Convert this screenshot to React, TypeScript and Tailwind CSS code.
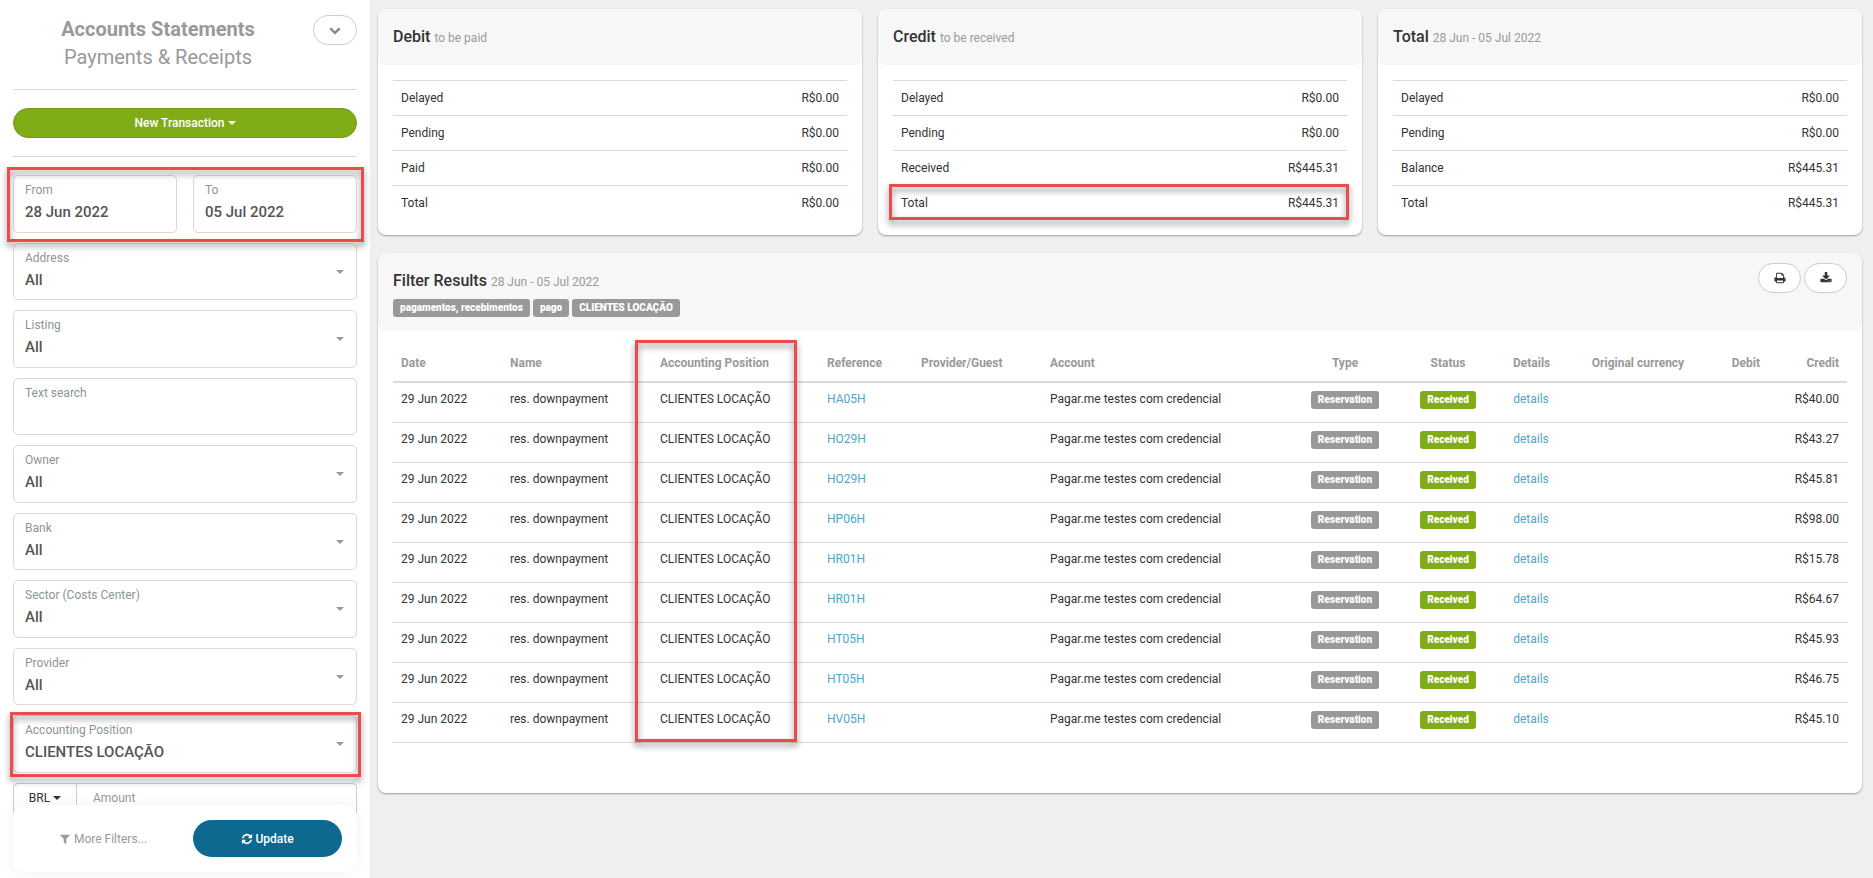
import React from 'react'

const filters = [
    { id: 'address', label: 'Address', value: 'All' },
    { id: 'listing', label: 'Listing', value: 'All' },
    { id: 'search', label: 'Text search', value: '' },
    { id: 'owner', label: 'Owner', value: 'All' },
    { id: 'bank', label: 'Bank', value: 'All' },
    { id: 'sector', label: 'Sector (Costs Center)', value: 'All' },
    { id: 'provider', label: 'Provider', value: 'All' },
    { id: 'position', label: 'Accounting Position', value: 'CLIENTES LOCAÇÃO', marked: true },
]

const summaries = [
    {
        title: 'Debit',
        note: 'to be paid',
        rows: [
            ['Delayed', 'R$0.00'],
            ['Pending', 'R$0.00'],
            ['Paid', 'R$0.00'],
            ['Total', 'R$0.00'],
        ],
    },
    {
        title: 'Credit',
        note: 'to be received',
        marked: true,
        rows: [
            ['Delayed', 'R$0.00'],
            ['Pending', 'R$0.00'],
            ['Received', 'R$445.31'],
            ['Total', 'R$445.31'],
        ],
    },
    {
        title: 'Total',
        note: '28 Jun - 05 Jul 2022',
        rows: [
            ['Delayed', 'R$0.00'],
            ['Pending', 'R$0.00'],
            ['Balance', 'R$445.31'],
            ['Total', 'R$445.31'],
        ],
    },
]

const tags = ['pagamentos, recebimentos', 'pago', 'CLIENTES LOCAÇÃO']

const transactions = [
    { reference: 'HA05H', credit: 'R$40.00' },
    { reference: 'HO29H', credit: 'R$43.27' },
    { reference: 'HO29H', credit: 'R$45.81' },
    { reference: 'HP06H', credit: 'R$98.00' },
    { reference: 'HR01H', credit: 'R$15.78' },
    { reference: 'HR01H', credit: 'R$64.67' },
    { reference: 'HT05H', credit: 'R$45.93' },
    { reference: 'HT05H', credit: 'R$46.75' },
    { reference: 'HV05H', credit: 'R$45.10' },
]

const icons = {
    chevron:
        'M1683 808l-742 741q-19 19-45 19t-45-19l-742-741q-19-19-19-45.500t19-45.500l166-165q19-19 45-19t45 19l531 531 531-531q19-19 45-19t45 19l166 165q19 19 19 45.500t-19 45.500z',
    print: 'M448 1536h896v-256h-896v256zm0-640h896v-384h-160q-40 0-68-28t-28-68v-160h-640v640zm1152 64q0-26-19-45t-45-19-45 19-19 45 19 45 45 19 45-19 19-45zm128 0v416q0 13-9.500 22.500t-22.500 9.500h-224v160q0 40-28 68t-68 28h-960q-40 0-68-28t-28-68v-160h-224q-13 0-22.500-9.500t-9.500-22.500v-416q0-79 56.500-135.500t135.500-56.500h64v-544q0-40 28-68t68-28h672q40 0 88 20t76 48l152 152q28 28 48 76t20 88v256h64q79 0 135.500 56.500t56.500 135.500z',
    download:
        'M1344 1344q0-26-19-45t-45-19-45 19-19 45 19 45 45 19 45-19 19-45zm256 0q0-26-19-45t-45-19-45 19-19 45 19 45 45 19 45-19 19-45zm128-224v320q0 40-28 68t-68 28h-1472q-40 0-68-28t-28-68v-320q0-40 28-68t68-28h465l135 136q58 56 136 56t136-56l136-136h464q40 0 68 28t28 68zm-325-569q17 41-14 70l-448 448q-18 19-45 19t-45-19l-448-448q-31-29-14-70 17-39 59-39h256v-448q0-26 19-45t45-19h256q26 0 45 19t19 45v448h256q42 0 59 39z',
    filter: 'M1595 295q17 41-14 70l-493 493v742q0 42-39 59-13 5-25 5-27 0-45-19l-256-256q-19-19-19-45v-486l-493-493q-31-29-14-70 17-39 59-39h1280q42 0 59 39z',
    refresh:
        'M1639 1056q0 5-1 7-64 268-268 434.500t-478 166.500q-146 0-282.500-55t-243.500-157l-129 129q-19 19-45 19t-45-19-19-45v-448q0-26 19-45t45-19h448q26 0 45 19t19 45-19 45l-137 137q71 66 161 102t187 36q134 0 250-65t186-179q11-17 53-117 8-23 30-23h192q13 0 22.500 9.500t9.500 22.500zm25-800v448q0 26-19 45t-45 19h-448q-26 0-45-19t-19-45 19-45l138-138q-148-137-349-137-134 0-250 65t-186 179q-11 17-53 117-8 23-30 23h-199q-13 0-22.500-9.500t-9.500-22.500v-7q65-268 270-434.500t480-166.500q146 0 284 55.500t245 156.500l130-129q19-19 45-19t45 19 19 45z',
}

function Icon({ name, className }: { name: keyof typeof icons; className: string }) {
    return (
        <svg viewBox="0 0 1792 1792" fill="currentColor" className={className} aria-hidden="true">
            <path d={icons[name]} />
        </svg>
    )
}

function Caret({ className }: { className: string }) {
    return (
        <svg viewBox="0 0 8 4" fill="currentColor" className={className} aria-hidden="true">
            <path d="M0 0h8L4 4z" />
        </svg>
    )
}

// Red frame drawn over an area that needs attention
function Marker({ className }: { className: string }) {
    return (
        <span
            aria-hidden="true"
            className={`pointer-events-none absolute z-10 border-3 border-[#ec4b4b] drop-shadow-[0_4px_3px_rgba(0,0,0,0.45)] ${className}`}
        />
    )
}

function Field({ id, label, value, marked }: { id: string; label: string; value: string; marked?: boolean }) {
    const isText = id === 'from' || id === 'to' || id === 'search'
    const control = 'block w-full appearance-none bg-transparent text-[15px] leading-5 font-medium text-[#555] outline-none'

    return (
        <div className="relative flex flex-col rounded-[5px] border border-[#d9d9d9] bg-white px-[11px] pt-1.5">
            <label htmlFor={id} className="text-xs leading-4 text-[#8b9695]">
                {label}
            </label>
            {isText ? (
                <input id={id} type="text" defaultValue={value} className={`mt-1 ${control}`} />
            ) : (
                <select id={id} defaultValue={value} className={`mt-1 ${control}`}>
                    <option>{value}</option>
                </select>
            )}
            {!isText && <Caret className="pointer-events-none absolute top-[26px] right-3 h-1 w-2 text-[#999]" />}
            {marked && <Marker className="-top-1 -right-[5px] -bottom-[5px] -left-1" />}
        </div>
    )
}

function Sidebar() {
    return (
        <aside className="relative h-screen w-[370px] shrink-0 overflow-hidden bg-white px-[13px]">
            <div className="flex items-start justify-between border-b border-[#d9d9d9] pt-[15px] pb-[18px]">
                <h1 className="flex-1 pr-2.5 text-center text-xl leading-7 font-bold text-[#999]">
                    Accounts Statements
                    <span className="block font-normal">Payments &amp; Receipts</span>
                </h1>
                <button
                    type="button"
                    aria-label="Toggle menu"
                    className="flex h-[30px] w-11 items-center justify-center rounded-full border border-[#ccc] bg-white text-[#888]"
                >
                    <Icon name="chevron" className="size-3" />
                </button>
            </div>

            <div className="border-b border-[#d9d9d9] py-[18px]">
                <button
                    type="button"
                    className="flex h-[30px] w-full items-center justify-center gap-[3px] rounded-full border border-[#739a16] bg-[#80ac18] text-xs font-medium text-white"
                >
                    New Transaction
                    <Caret className="h-1 w-2" />
                </button>
            </div>

            <form className="mt-[18px]">
                <div className="grid h-[598px] auto-rows-fr gap-2.5">
                    <div className="relative grid grid-cols-2 gap-4">
                        <Field id="from" label="From" value="28 Jun 2022" />
                        <Field id="to" label="To" value="05 Jul 2022" />
                        <Marker className="-top-2 -right-[7px] -bottom-[9px] -left-1.5" />
                    </div>
                    {filters.map((filter) => (
                        <Field key={filter.id} {...filter} />
                    ))}
                </div>

                <div className="mt-2.5 flex h-[34px] rounded-[5px] border border-[#ccc]">
                    <button
                        type="button"
                        className="flex h-7 w-[63px] items-center justify-center gap-[3px] border-r border-[#ccc] text-xs text-[#333]"
                    >
                        BRL
                        <Caret className="h-1 w-2" />
                    </button>
                    <input
                        type="text"
                        aria-label="Amount"
                        placeholder="Amount"
                        className="h-7 flex-1 px-4 text-xs outline-none placeholder:text-[#999]"
                    />
                </div>
            </form>

            <div className="absolute inset-x-[13px] bottom-1.5 z-10 flex h-[67px] items-center rounded-xl bg-white pr-[15px] shadow-[0_0_15px_rgba(0,0,0,0.06)]">
                <button type="button" className="flex flex-1 items-center justify-center gap-[3px] text-xs text-[#999]">
                    <Icon name="filter" className="size-3" />
                    More Filters...
                </button>
                <button
                    type="button"
                    className="flex h-[37px] w-[149px] items-center justify-center gap-0.5 rounded-full bg-[#0d6990] text-xs font-medium text-white"
                >
                    <Icon name="refresh" className="size-3" />
                    Update
                </button>
            </div>
        </aside>
    )
}

function Summary({ title, note, rows, marked }: { title: string; note: string; rows: string[][]; marked?: boolean }) {
    return (
        <section className="rounded-lg bg-white pb-3.5 shadow-[0_1px_2px_rgba(0,0,0,0.35)]">
            <header className="rounded-lg bg-[#f7f7f7] px-[15px] py-4">
                <h2 className="text-base leading-6 font-medium text-[#333]">
                    {title} <small className="text-xs font-normal text-[#999]">{note}</small>
                </h2>
            </header>
            <div className="relative px-[15px] pt-[15px]">
                <table className="w-full text-xs text-[#333]">
                    <tbody>
                        {rows.map(([name, amount]) => (
                            <tr key={name} className="h-[35px] border-t border-[#d9d9d9]">
                                <td className="px-2">{name}</td>
                                <td className="px-2 text-right">{amount}</td>
                            </tr>
                        ))}
                    </tbody>
                </table>
                {marked && <Marker className="right-[13px] bottom-px left-[11px] h-9" />}
            </div>
        </section>
    )
}

function Results() {
    const badge = 'inline-block rounded-[3px] px-[7px] align-top text-[10px] leading-[18px] font-black text-white'
    const roundButton =
        'flex h-[30px] w-[43px] items-center justify-center rounded-full border border-[#ccc] bg-white text-[#333]'

    return (
        <section className="mt-[18px] rounded-lg bg-white pb-[50px] shadow-[0_1px_2px_rgba(0,0,0,0.35)]">
            <header className="flex justify-between rounded-lg bg-[#f7f7f7] px-[15px] pb-3.5">
                <div className="pt-4">
                    <h2 className="text-base leading-6 font-medium text-[#333]">
                        Filter Results <small className="text-xs font-normal text-[#999]">28 Jun - 05 Jul 2022</small>
                    </h2>
                    <div className="mt-1.5 flex gap-[3px]">
                        {tags.map((tag) => (
                            <span key={tag} className={`${badge} bg-[#999]`}>
                                {tag}
                            </span>
                        ))}
                    </div>
                </div>
                <div className="flex gap-[3px] pt-2.5">
                    <button type="button" aria-label="Print" className={roundButton}>
                        <Icon name="print" className="size-3" />
                    </button>
                    <button type="button" aria-label="Download" className={roundButton}>
                        <Icon name="download" className="size-3" />
                    </button>
                </div>
            </header>

            <div className="px-[15px] pt-[15px]">
                <table className="w-full table-fixed text-left text-xs text-[#333]">
                    <thead>
                        <tr className="h-9 border-b-2 border-[#d9d9d9] text-[#999] *:px-2 *:font-bold">
                            <th className="w-[109px]">Date</th>
                            <th className="w-[150px]">Name</th>
                            <th className="relative w-[167px]">
                                Accounting Position
                                <Marker className="-top-[6px] right-[22px] -left-[17px] h-[402px]" />
                            </th>
                            <th className="w-[94px]">Reference</th>
                            <th className="w-[129px]">Provider/Guest</th>
                            <th className="w-[257px]">Account</th>
                            <th className="w-[92px] text-center">Type</th>
                            <th className="w-[114px] text-center">Status</th>
                            <th className="w-[52px] text-center">Details</th>
                            <th className="w-[162px] text-center">Original currency</th>
                            <th className="w-[49px] text-right">Debit</th>
                            <th className="w-[79px] text-right">Credit</th>
                        </tr>
                    </thead>
                    <tbody>
                        {transactions.map(({ reference, credit }, index) => (
                            <tr
                                key={index}
                                className="h-10 border-b border-[#d9d9d9] first:h-[41px] *:px-2 *:pt-2 *:align-top"
                            >
                                <td>29 Jun 2022</td>
                                <td>res. downpayment</td>
                                <td>CLIENTES LOCAÇÃO</td>
                                <td>
                                    <a href="#" className="text-[#4ea6cc]">
                                        {reference}
                                    </a>
                                </td>
                                <td></td>
                                <td>Pagar.me testes com credencial</td>
                                <td className="text-center">
                                    <span className={`${badge} bg-[#999]`}>Reservation</span>
                                </td>
                                <td className="text-center">
                                    <span className={`${badge} bg-[#80ac18]`}>Received</span>
                                </td>
                                <td className="text-center">
                                    <a href="#" className="text-[#4ea6cc]">
                                        details
                                    </a>
                                </td>
                                <td></td>
                                <td></td>
                                <td className="text-right">{credit}</td>
                            </tr>
                        ))}
                    </tbody>
                </table>
            </div>
        </section>
    )
}

export default function App() {
    return (
        <div className="flex min-h-screen bg-[#efefef] font-[Roboto,sans-serif]">
            <Sidebar />
            <main className="min-w-0 flex-1 pt-[9px] pr-[11px] pl-2">
                <div className="grid grid-cols-3 gap-4">
                    {summaries.map((summary) => (
                        <Summary key={summary.title} {...summary} />
                    ))}
                </div>
                <Results />
            </main>
        </div>
    )
}
